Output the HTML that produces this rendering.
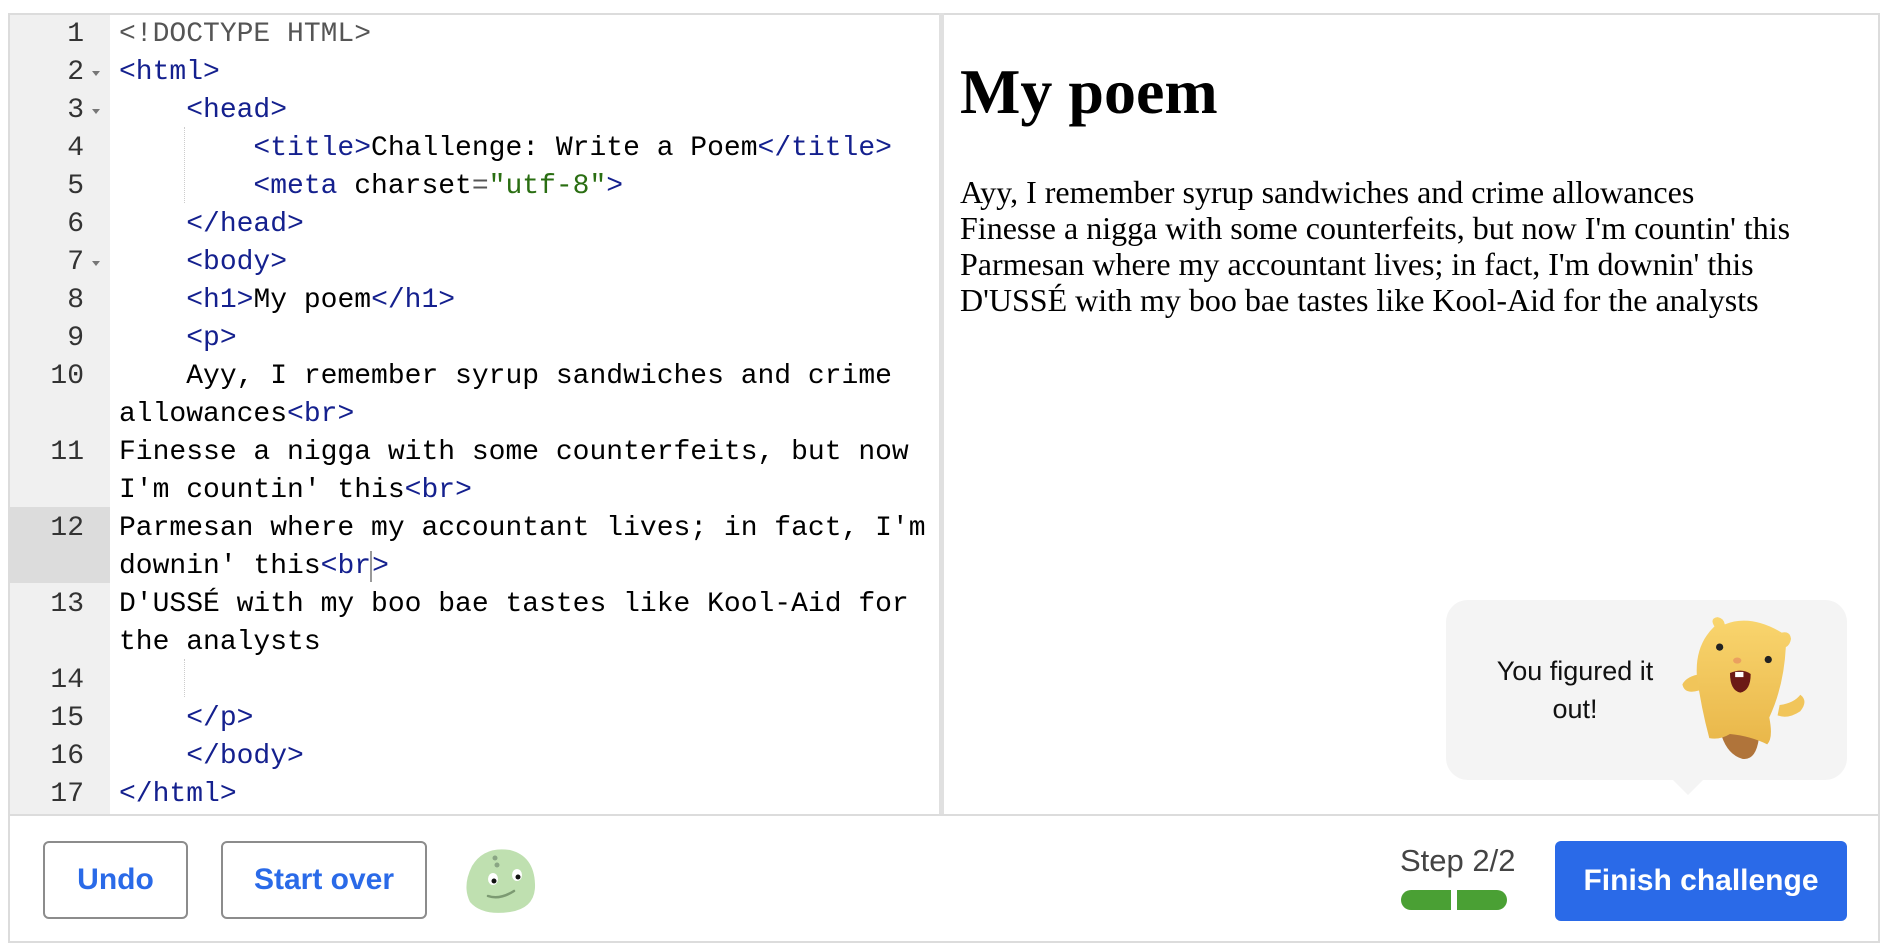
<!DOCTYPE html>
<html><head><meta charset="utf-8"><style>
body{margin:0;width:1882px;height:946px;background:#fff;position:relative;overflow:hidden;font-family:"Liberation Sans",sans-serif}
.frame{position:absolute;left:8px;top:13px;width:1872px;height:930px;border:2px solid #dcdcdc;box-sizing:border-box}
.gutter{position:absolute;left:10px;top:15px;width:100px;height:800px;background:#f0f0f0}
.hl{position:absolute;left:10px;top:507px;width:100px;height:76px;background:#dcdcdc}
.code{position:absolute;left:119px;top:16px;font-family:"Liberation Mono",monospace;font-size:28px;line-height:38px;color:#000;white-space:pre}
.nums{position:absolute;left:10px;top:16px;width:74px;text-align:right;font-family:"Liberation Mono",monospace;font-size:28px;line-height:38px;color:#333;white-space:pre}
.t{color:#14208e}.d{color:#555}.s{color:#2a6e12}
.fold{position:absolute;left:92px;width:0;height:0;border-left:4px solid transparent;border-right:4px solid transparent;border-top:5px solid #777}
.guide{position:absolute;left:184px;border-left:1px dotted #ccc}
.divider{position:absolute;left:939px;top:13px;width:5px;height:802px;background:#e0e0e0}
.footline{position:absolute;left:8px;top:814px;width:1872px;height:2px;background:#dcdcdc}
h1{position:absolute;left:960px;top:60px;margin:0;font-family:"Liberation Serif",serif;font-size:64px;line-height:64px;font-weight:bold}
.poem{position:absolute;left:960px;top:174px;font-family:"Liberation Serif",serif;font-size:32px;line-height:36px;white-space:nowrap}
.btn{position:absolute;top:841px;height:78px;border:2px solid #8c8c8c;border-radius:6px;box-sizing:border-box;color:#2a6ae8;font-weight:bold;font-size:30px;display:flex;align-items:center;justify-content:center}
.bubble{position:absolute;left:1446px;top:600px;width:401px;height:180px;background:#f4f4f4;border-radius:22px}
.tail{position:absolute;left:1671px;top:778px;width:0;height:0;border-left:17px solid transparent;border-right:17px solid transparent;border-top:17px solid #f4f4f4}
.btxt{position:absolute;left:1480px;top:652px;width:190px;text-align:center;font-size:27px;line-height:38px;color:#111}
.step{position:absolute;left:1400px;top:843px;font-size:31px;color:#444}
.bar{position:absolute;top:890px;height:20px;background:#4aa034}
.finish{position:absolute;left:1555px;top:841px;width:292px;height:80px;background:#2a6ae8;border-radius:6px;color:#fff;font-weight:bold;font-size:30px;display:flex;align-items:center;justify-content:center}
</style></head><body>
<div class="frame"></div>
<div class="gutter"></div>
<div class="hl"></div>
<div class="divider"></div>
<div class="footline"></div>
<div class="nums">1
2
3
4
5
6
7
8
9
10

11

12

13

14
15
16
17</div>
<div class="fold" style="top:71px"></div>
<div class="fold" style="top:109px"></div>
<div class="fold" style="top:261px"></div>
<div class="guide" style="top:127px;height:76px"></div>
<div class="guide" style="top:659px;height:38px"></div>
<div class="code"><span class="d">&lt;!DOCTYPE HTML&gt;</span>
<span class="t">&lt;html&gt;</span>
    <span class="t">&lt;head&gt;</span>
        <span class="t">&lt;title&gt;</span>Challenge: Write a Poem<span class="t">&lt;/title&gt;</span>
        <span class="t">&lt;meta</span> charset<span class="d">=</span><span class="s">"utf-8"</span><span class="t">&gt;</span>
    <span class="t">&lt;/head&gt;</span>
    <span class="t">&lt;body&gt;</span>
    <span class="t">&lt;h1&gt;</span>My poem<span class="t">&lt;/h1&gt;</span>
    <span class="t">&lt;p&gt;</span>
    Ayy, I remember syrup sandwiches and crime
allowances<span class="t">&lt;br&gt;</span>
Finesse a nigga with some counterfeits, but now
I'm countin' this<span class="t">&lt;br&gt;</span>
Parmesan where my accountant lives; in fact, I'm
downin' this<span class="t">&lt;br</span><span style="border-left:2px solid #999;margin-left:-1px"></span><span class="t">&gt;</span>
D'USSÉ with my boo bae tastes like Kool-Aid for
the analysts

    <span class="t">&lt;/p&gt;</span>
    <span class="t">&lt;/body&gt;</span>
<span class="t">&lt;/html&gt;</span></div>

<h1>My poem</h1>
<div class="poem">Ayy, I remember syrup sandwiches and crime allowances<br>Finesse a nigga with some counterfeits, but now I'm countin' this<br>Parmesan where my accountant lives; in fact, I'm downin' this<br>D'USSÉ with my boo bae tastes like Kool-Aid for the analysts</div>

<div class="bubble"></div><div class="tail"></div>
<div class="btxt">You figured it out!</div>
<svg style="position:absolute;left:1678px;top:614px" width="135" height="150" viewBox="0 0 130 145">
<defs><linearGradient id="g" x1="0" y1="0" x2="0" y2="1"><stop offset="0" stop-color="#f9d56e"/><stop offset="1" stop-color="#e9b74a"/></linearGradient></defs>
<path d="M42 118 Q60 110 78 120 Q75 142 62 140 Q48 136 42 118Z" fill="#b0743a"/>
<path d="M22 58 Q8 60 4 68 Q6 78 20 74Z M98 88 Q112 86 118 78 Q126 84 118 94 Q106 102 96 98Z" fill="#f1c55a"/>
<path d="M35 12 Q30 4 38 3 Q44 4 45 10 Q70 0 100 18 Q108 16 109 24 Q108 30 104 32 Q102 70 88 100 Q92 120 86 126 Q70 118 50 116 Q40 122 30 120 Q22 90 18 60 Q16 30 35 12Z" fill="url(#g)"/>
<circle cx="40" cy="32" r="3.5" fill="#222"/><circle cx="87" cy="44" r="3.5" fill="#222"/>
<ellipse cx="57" cy="45" rx="4" ry="3" fill="#eaa060"/>
<path d="M50 57 Q62 52 70 58 Q70 74 60 76 Q50 74 50 57Z" fill="#6b1a16"/>
<rect x="55" y="56" width="8" height="5" fill="#fff"/>
</svg>

<div class="btn" style="left:43px;width:145px">Undo</div>
<div class="btn" style="left:221px;width:206px">Start over</div>
<svg style="position:absolute;left:462px;top:846px" width="76" height="70" viewBox="0 0 76 70">
<path d="M10 20 Q22 0 48 4 Q72 10 73 38 Q74 62 48 66 Q20 70 8 56 Q0 40 10 20Z" fill="#bfe0b0"/>
<circle cx="33" cy="12" r="2.5" fill="#8aa584"/><circle cx="35" cy="19" r="2.5" fill="#8aa584"/>
<ellipse cx="31" cy="33" rx="5" ry="6" fill="#fff"/><ellipse cx="55" cy="29" rx="5" ry="6" fill="#fff"/>
<circle cx="32" cy="35" r="2.5" fill="#111"/><circle cx="56" cy="31" r="2.5" fill="#111"/>
<path d="M26 50 Q38 54 52 45" fill="none" stroke="#7c9a72" stroke-width="2.5" stroke-linecap="round"/>
</svg>

<div class="step">Step 2/2</div>
<div class="bar" style="left:1401px;width:50px;border-radius:10px 0 0 10px"></div>
<div class="bar" style="left:1457px;width:50px;border-radius:0 10px 10px 0"></div>
<div class="finish">Finish challenge</div>
</body></html>
